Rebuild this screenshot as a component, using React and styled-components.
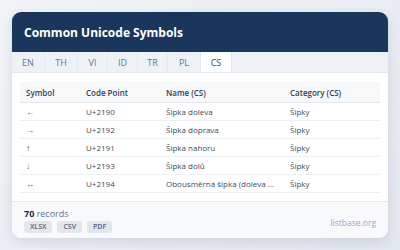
import React from 'react';
import styled, { createGlobalStyle } from 'styled-components';

const GlobalStyle = createGlobalStyle`
	body {
		margin: 0;
		font-family: "Open Sans", "Noto Sans", sans-serif;
		background: linear-gradient(135deg, #f1f3f7 0%, #e3e7ee 100%);
		width: 400px;
		height: 250px;
		overflow: hidden;
	}
`;

const Page = styled.div`
	padding: 12px;
`;

const Card = styled.div`
	width: 376px;
	height: 226px;
	background: #ffffff;
	border-radius: 9px;
	box-shadow: 0 4px 12px rgba(30, 45, 80, 0.12);
	overflow: hidden;
	display: flex;
	flex-direction: column;
`;

const Header = styled.div`
	height: 40px;
	background: #1b365d;
	display: flex;
	align-items: center;
	padding: 0 12px;
	color: #ffffff;
	font-size: 12px;
	font-weight: 700;
`;

const Tabs = styled.div`
	display: flex;
	height: 20px;
	background: #eef2f7;
	border-bottom: 1px solid #e3e8ef;
`;

const Tab = styled.div`
	width: ${(p) => p.w}px;
	display: flex;
	align-items: center;
	justify-content: center;
	font-size: 9px;
	color: ${(p) => (p.active ? '#1e4d8c' : '#6b7789')};
	background: ${(p) => (p.active ? '#ffffff' : 'transparent')};
	border-right: 1px solid #e3e8ef;
`;

const Body = styled.div`
	flex: 1;
	padding: 9px 8px 0;
`;

const Table = styled.table`
	width: 360px;
	border-collapse: collapse;
	table-layout: fixed;
	font-size: 8px;
	color: #3f4a5a;
`;

const Th = styled.th`
	text-align: left;
	font-weight: 600;
	height: 20px;
	padding: 0 6px;
	background: #f7f8fa;
	border-bottom: 1px solid #e3e7ed;
	color: #334155;
	width: ${(p) => p.w}px;
`;

const Td = styled.td`
	height: 17px;
	padding: 0 6px;
	border-bottom: 1px solid #eef1f4;
	white-space: nowrap;
	overflow: hidden;
	text-overflow: ellipsis;
`;

const Footer = styled.div`
	height: 36px;
	background: #f8f9fb;
	border-top: 1px solid #e6e9ee;
	display: flex;
	justify-content: space-between;
	align-items: center;
	padding: 0 12px;
`;

const Count = styled.div`
	font-size: 9px;
	line-height: 12px;
	color: #64748b;
	b {
		color: #1e293b;
		font-weight: 700;
	}
`;

const Buttons = styled.div`
	display: flex;
	gap: 5px;
	margin-top: 1px;
`;

const Btn = styled.div`
	height: 12px;
	padding: 0 6px;
	background: #e2e7ee;
	border-radius: 3px;
	font-size: 7px;
	font-weight: 600;
	color: #556274;
	display: flex;
	align-items: center;
`;

const Brand = styled.div`
	font-size: 8.5px;
	color: #a7a3bd;
	margin-top: 4px;
`;

const tabs = [
	['EN', 32],
	['TH', 32],
	['VI', 29],
	['ID', 29],
	['TR', 29],
	['PL', 32],
	['CS', 30],
];

const rows = [
	['←', 'U+2190', 'Šipka doleva'],
	['→', 'U+2192', 'Šipka doprava'],
	['↑', 'U+2191', 'Šipka nahoru'],
	['↓', 'U+2193', 'Šipka dolů'],
	['↔', 'U+2194', 'Obousměrná šipka (doleva doprava)'],
];

const App = () => {
	return (
		<Page>
			<GlobalStyle />
			<Card>
				<Header>Common Unicode Symbols</Header>
				<Tabs>
					{tabs.map(([t, w]) => (
						<Tab key={t} w={w} active={t === 'CS'}>
							{t}
						</Tab>
					))}
				</Tabs>
				<Body>
					<Table>
						<thead>
							<tr>
								<Th w={48}>Symbol</Th>
								<Th w={68}>Code Point</Th>
								<Th w={112}>Name (CS)</Th>
								<Th w={84}>Category (CS)</Th>
							</tr>
						</thead>
						<tbody>
							{rows.map(([s, c, n]) => (
								<tr key={c}>
									<Td>{s}</Td>
									<Td>{c}</Td>
									<Td>{n}</Td>
									<Td>Šipky</Td>
								</tr>
							))}
						</tbody>
					</Table>
				</Body>
				<Footer>
					<div>
						<Count>
							<b>70</b> records
						</Count>
						<Buttons>
							<Btn>XLSX</Btn>
							<Btn>CSV</Btn>
							<Btn>PDF</Btn>
						</Buttons>
					</div>
					<Brand>listbase.org</Brand>
				</Footer>
			</Card>
		</Page>
	);
};

export default App;
